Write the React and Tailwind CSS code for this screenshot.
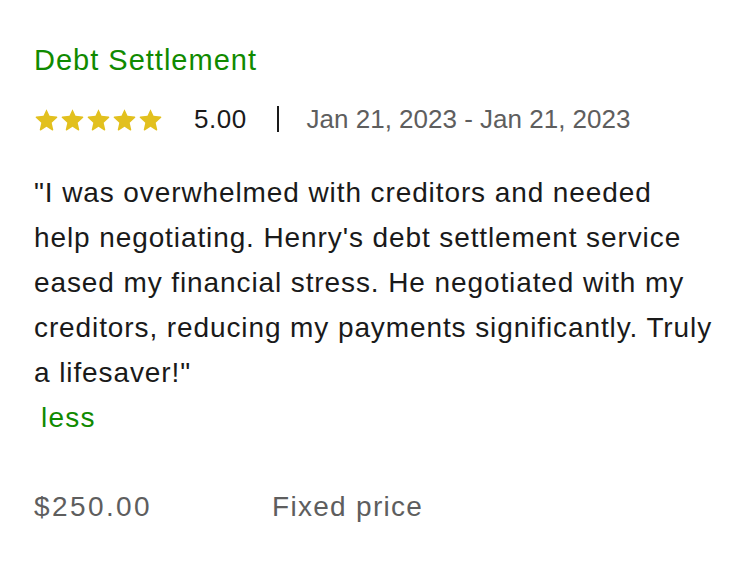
function Star() {
  return (
    <svg viewBox="0 0 24 22" className="w-[25px] h-[23px]" fill="#e2c01e">
      <path
        d="M12 1.2l2.9 6.3 6.9.7c.6.1.8.8.4 1.2l-5.2 4.6 1.5 6.8c.1.6-.5 1-1 .7L12 17.9l-5.5 3.6c-.5.3-1.1-.1-1-.7l1.5-6.8-5.2-4.6c-.4-.4-.2-1.1.4-1.2l6.9-.7z"
        strokeLinejoin="round"
      />
    </svg>
  )
}

export default function App() {
  return (
    <div className="bg-white min-h-screen pl-[34px] pr-[20px] pt-[42px] font-['Liberation_Sans',Arial,sans-serif]">
      <h2 className="text-[29px] leading-[36px] tracking-[1px] text-[#108a00]">Debt Settlement</h2>

      <div className="flex items-center mt-[18px] h-[46px]">
        <div className="flex gap-[1px]">
          <Star />
          <Star />
          <Star />
          <Star />
          <Star />
        </div>
        <span className="ml-[31px] text-[26px] tracking-[0.5px] text-[#1a1a1a]">5.00</span>
        <span className="ml-[30px] w-[2px] h-[26px] bg-[#1a1a1a]" />
        <span className="ml-[28px] text-[26px] text-[#5e5e5e]">Jan 21, 2023 - Jan 21, 2023</span>
      </div>

      <div className="mt-[28px] text-[28px] leading-[45px] tracking-[0.9px] text-[#1a1a1a]">
        <p>
          "I was overwhelmed with creditors and needed
          <br />
          help negotiating. Henry's debt settlement service
          <br />
          eased my financial stress. He negotiated with my
          <br />
          creditors, reducing my payments significantly. Truly
          <br />a lifesaver!"
        </p>
        <button className="ml-[7px] tracking-[1.2px] text-[#108a00]">less</button>
      </div>

      <div className="flex items-center mt-[44px] h-[45px] text-[28px] text-[#5e5e5e]">
        <span className="w-[238px] tracking-[2.4px]">$250.00</span>
        <span className="tracking-[1.3px]">Fixed price</span>
      </div>
    </div>
  )
}
